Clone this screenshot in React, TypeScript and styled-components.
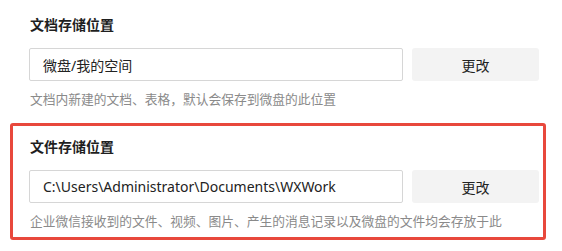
import { createGlobalStyle } from 'styled-components';
import styled from 'styled-components';

const GlobalStyle = createGlobalStyle`
	body {
		margin: 0;
		background: #ffffff;
		font-family: 'Noto Sans', 'Noto Sans CJK SC', sans-serif;
	}
`;

const Page = styled.div`
	width: 562px;
	height: 251px;
	padding: 1px 0 0 10px;
	box-sizing: border-box;
	display: flex;
	flex-direction: column;
	gap: 5px;
`;

const Section = styled.div<{ $active?: boolean }>`
	width: 536px;
	height: 117px;
	box-sizing: border-box;
	padding: 11px 4px 0 16px;
	border: 3px solid ${(p) => (p.$active ? '#e8483c' : 'transparent')};
	border-radius: 3px;
	display: flex;
	flex-direction: column;
`;

const Title = styled.div`
	font-size: 14px;
	line-height: 20px;
	font-weight: bold;
	color: #1f1f1f;
	padding-left: 1px;
`;

const Row = styled.div`
	margin-top: 13px;
	display: flex;
	gap: 9px;
`;

const PathInput = styled.div`
	width: 374px;
	height: 33px;
	box-sizing: border-box;
	border: 1px solid #d6d6d6;
	border-radius: 2px;
	padding: 0 13px;
	display: flex;
	align-items: center;
	font-size: 14px;
	color: #222222;
`;

const ChangeButton = styled.button`
	width: 127px;
	height: 33px;
	border: none;
	border-radius: 3px;
	background: #f3f3f3;
	font-family: inherit;
	font-size: 14px;
	color: #222222;
	cursor: pointer;
`;

const Hint = styled.div`
	margin-top: 9px;
	padding-left: 1px;
	font-size: 12.75px;
	line-height: 18px;
	color: #8a8a8a;
	white-space: nowrap;
`;

function App() {
	return (
		<Page>
			<GlobalStyle />
			<Section>
				<Title>文档存储位置</Title>
				<Row>
					<PathInput>微盘/我的空间</PathInput>
					<ChangeButton>更改</ChangeButton>
				</Row>
				<Hint>文档内新建的文档、表格，默认会保存到微盘的此位置</Hint>
			</Section>
			<Section $active>
				<Title>文件存储位置</Title>
				<Row>
					<PathInput>C:\Users\Administrator\Documents\WXWork</PathInput>
					<ChangeButton>更改</ChangeButton>
				</Row>
				<Hint>企业微信接收到的文件、视频、图片、产生的消息记录以及微盘的文件均会存放于此</Hint>
			</Section>
		</Page>
	);
}

export default App;
